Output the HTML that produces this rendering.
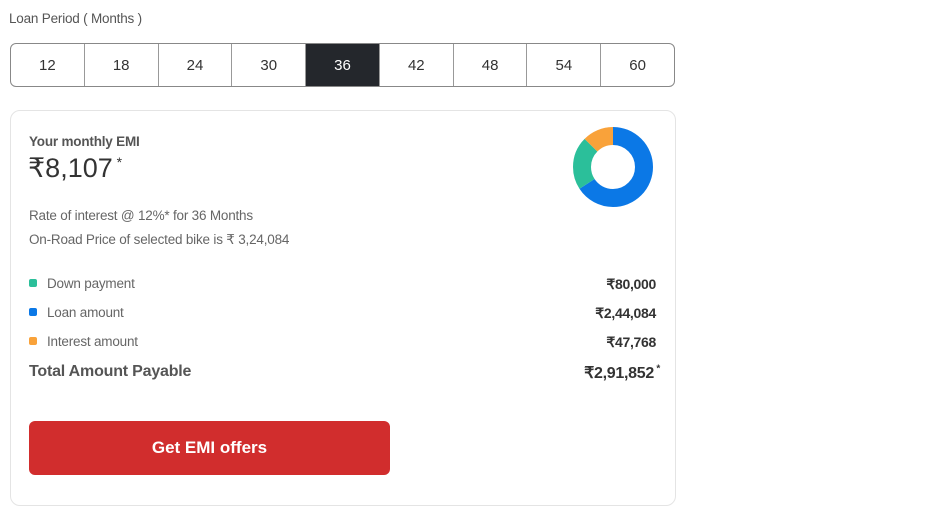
<!DOCTYPE html>
<html><head><style>
body{margin:0;width:930px;height:523px;background:#fff;font-family:"Liberation Sans",sans-serif;color:#333;position:relative;overflow:hidden}
.a{position:absolute}
.lbl{left:9px;top:11px;font-size:13.5px;color:#555;letter-spacing:-0.2px}
.seg{left:10px;top:43px;width:663px;height:42px;border:1px solid #888;border-radius:6px;display:flex;overflow:hidden}
.seg div{flex:1;border-left:1px solid #999;display:flex;align-items:center;justify-content:center;font-size:15px;color:#333}
.seg div:first-child{border-left:none}
.seg .on{background:#24272c;color:#fff}
.card{left:10px;top:110px;width:664px;height:394px;border:1px solid #e4e4e4;border-radius:10px}
.t{left:29px;font-size:13.5px;color:#666;letter-spacing:-0.2px}
.dot{width:8px;height:8px;border-radius:2px;display:inline-block;margin-right:10px;vertical-align:1px}
.r{right:274px;font-size:14px;font-weight:bold;color:#333;letter-spacing:-0.3px}
</style></head><body>
<div class="a lbl">Loan Period ( Months )</div>
<div class="a seg"><div>12</div><div>18</div><div>24</div><div>30</div><div class="on">36</div><div>42</div><div>48</div><div>54</div><div>60</div></div>
<div class="a card"></div>
<div class="a t" style="top:134px;font-weight:bold;color:#555">Your monthly EMI</div>
<div class="a" style="left:28px;top:153px;font-size:27px;color:#333">₹8,107<sup style="font-size:14px;vertical-align:10px"> *</sup></div>
<div class="a t" style="top:208px">Rate of interest @ 12%* for 36 Months</div>
<div class="a t" style="top:232px">On-Road Price of selected bike is ₹ 3,24,084</div>
<div class="a t" style="top:276px"><span class="dot" style="background:#2bbf9a"></span>Down payment</div>
<div class="a t" style="top:305px"><span class="dot" style="background:#0b78e6"></span>Loan amount</div>
<div class="a t" style="top:334px"><span class="dot" style="background:#f9a23a"></span>Interest amount</div>
<div class="a t" style="top:363px;font-size:16px;font-weight:bold;color:#555">Total Amount Payable</div>
<div class="a r" style="top:276px">₹80,000</div>
<div class="a r" style="top:305px">₹2,44,084</div>
<div class="a r" style="top:334px">₹47,768</div>
<div class="a" style="right:270px;top:363px;font-size:16px;font-weight:bold;color:#333;letter-spacing:-0.3px">₹2,91,852<sup style="font-size:10px"> *</sup></div>
<svg class="a" style="left:572px;top:126px" width="82" height="82" viewBox="0 0 82 82">
<g transform="rotate(-90 41 41)" fill="none" stroke-width="18">
<circle cx="41" cy="41" r="31" stroke="#0b78e6" stroke-dasharray="128 200"/>
<circle cx="41" cy="41" r="31" stroke="#2bbf9a" stroke-dasharray="0 128 42 200"/>
<circle cx="41" cy="41" r="31" stroke="#f9a23a" stroke-dasharray="0 170 25 200"/>
</g></svg>
<div class="a" style="left:29px;top:421px;width:361px;height:54px;background:#d12d2d;border-radius:6px;color:#fff;font-weight:bold;font-size:17px;display:flex;align-items:center;justify-content:center">Get EMI offers</div>
</body></html>
